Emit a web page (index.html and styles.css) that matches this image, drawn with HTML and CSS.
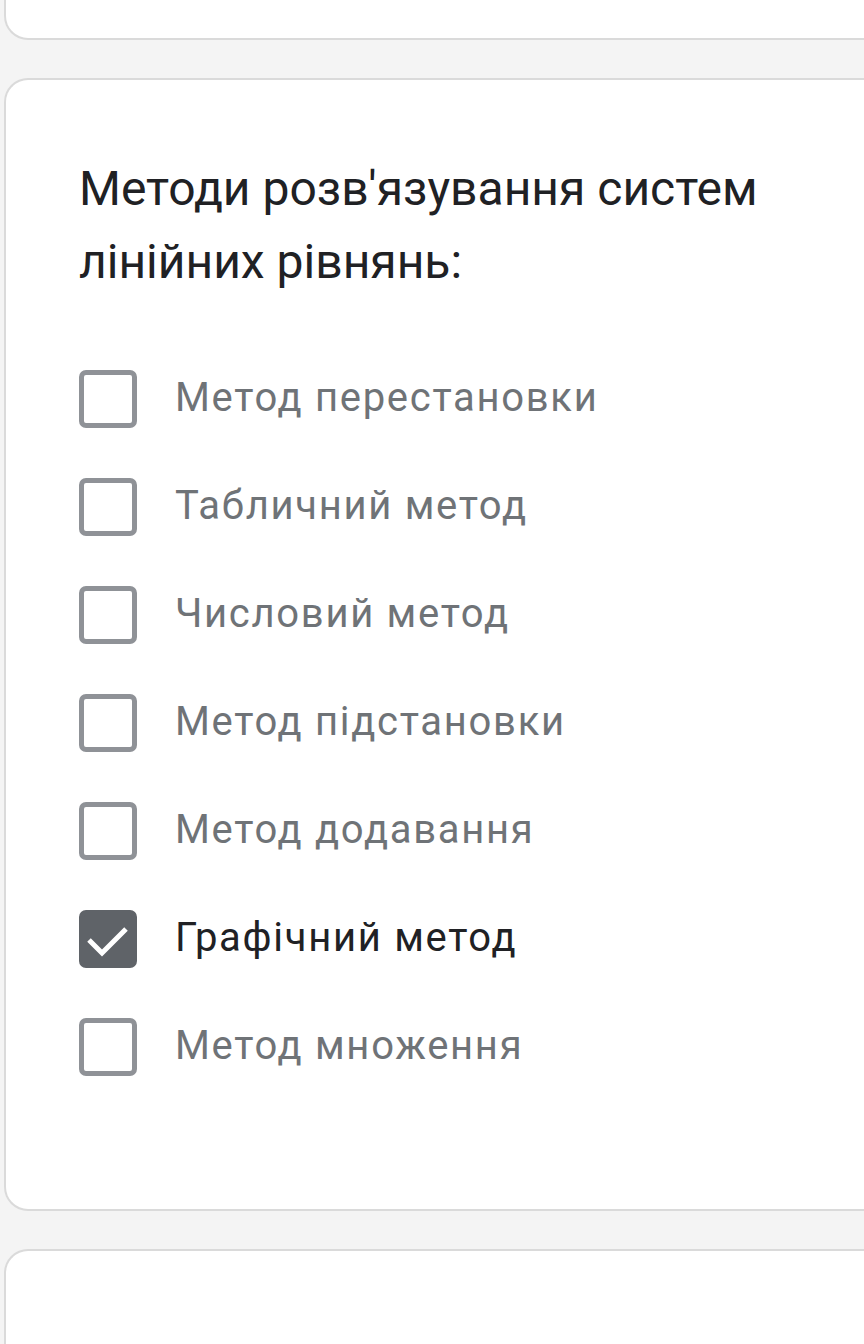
FILE: index.html
```html
<!DOCTYPE html>
<html lang="uk">
<head>
<meta charset="utf-8">
<link rel="stylesheet" href="styles.css">
</head>
<body>
<div class="page">
  <div class="card card-top"></div>

  <div class="card card-question">
    <div class="title">Методи розв'язування систем лінійних рівнянь:</div>
    <div class="options">
      <div class="option"><span class="box"></span><span class="label">Метод перестановки</span></div>
      <div class="option"><span class="box"></span><span class="label">Табличний метод</span></div>
      <div class="option"><span class="box"></span><span class="label">Числовий метод</span></div>
      <div class="option"><span class="box"></span><span class="label">Метод підстановки</span></div>
      <div class="option"><span class="box"></span><span class="label">Метод додавання</span></div>
      <div class="option checked"><span class="box"><svg viewBox="0 0 58 58" width="58" height="58"><path d="M10 30 L23 43 L47 19" fill="none" stroke="#ffffff" stroke-width="5"/></svg></span><span class="label">Графічний метод</span></div>
      <div class="option"><span class="box"></span><span class="label">Метод множення</span></div>
    </div>
  </div>

  <div class="card card-next">
    <div class="title">Яке з рівнянь є лінійним?</div>
  </div>
</div>
</body>
</html>
```

FILE: styles.css
```css
html, body {
  margin: 0;
  padding: 0;
  background: #f4f4f4;
  overflow: hidden;
}

.page {
  width: 864px;
  height: 1344px;
  overflow: hidden;
  display: flex;
  flex-direction: column;
  gap: 38px;
}

.card {
  background: #ffffff;
  border: 2px solid #dadada;
  border-right: none;
  border-radius: 24px 0 0 24px;
  margin-left: 4px;
  box-sizing: border-box;
  flex-shrink: 0;
}

.card-top {
  height: 40px;
  border-top: none;
  border-radius: 0 0 0 24px;
}

.card-question {
  padding: 72px 0 133px 73px;
}

.card-next {
  padding: 74px 0 0 73px;
  height: 400px;
}

.title {
  font-family: Roboto, "Noto Sans", sans-serif;
  font-size: 48px;
  line-height: 73px;
  color: #202124;
  width: 740px;
}

.options {
  margin-top: 72px;
  display: flex;
  flex-direction: column;
  gap: 50px;
}

.option {
  display: flex;
  align-items: center;
  height: 58px;
}

.box {
  width: 58px;
  height: 58px;
  box-sizing: border-box;
  border: 5px solid #8f9297;
  border-radius: 7px;
  flex-shrink: 0;
  display: flex;
  align-items: center;
  justify-content: center;
}

.box svg {
  display: block;
  flex-shrink: 0;
}

.label {
  margin-left: 38px;
  padding-bottom: 4px;
  font-family: Roboto, "Noto Sans", sans-serif;
  font-size: 40px;
  letter-spacing: 1.7px;
  color: #6f7377;
}

.checked .box {
  background: #5f6368;
  border-color: #5f6368;
}

.checked .label {
  color: #202124;
}
```
